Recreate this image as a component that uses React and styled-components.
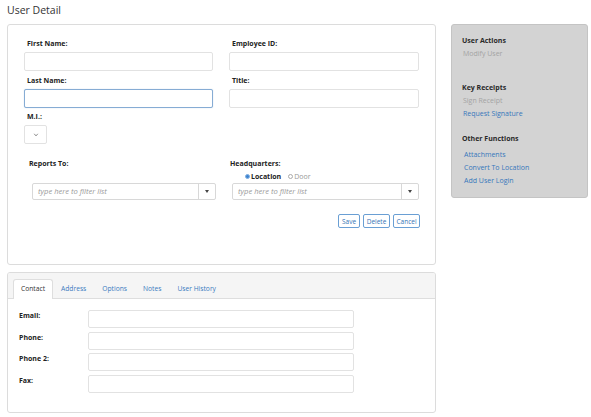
import styled, { createGlobalStyle } from "styled-components";

const GlobalStyle = createGlobalStyle`
  html, body {
    margin: 0;
    padding: 0;
    background: #fff;
  }
  body {
    font-family: "Open Sans", "Liberation Sans", sans-serif;
    font-size: 7px;
    color: #333;
  }
  * {
    box-sizing: border-box;
  }
`;

const Page = styled.div`
  width: 591px;
  padding: 3px 0 0 7px;
`;

const Title = styled.h1`
  margin: 0 0 6px;
  font-size: 10.5px;
  font-weight: 400;
  line-height: 15px;
  color: #333;
`;

const Layout = styled.div`
  display: flex;
  align-items: flex-start;
  gap: 15px;
`;

const LeftColumn = styled.div`
  width: 429px;
  display: flex;
  flex-direction: column;
  gap: 7px;
`;

const Card = styled.div`
  height: ${(p) => p.$height}px;
  border: 1px solid #dcdcdc;
  border-radius: 3px;
  background: #fff;
  overflow: hidden;
`;

const MainBody = styled.div`
  padding: 13px 16px 0;
`;

const FieldGrid = styled.div`
  display: grid;
  grid-template-columns: 189px 190px;
  column-gap: 16px;
`;

const Field = styled.div`
  display: flex;
  flex-direction: column;
  margin-top: ${(p) => p.$top || 0}px;
`;

const Label = styled.label`
  display: block;
  font-weight: 700;
  line-height: 12px;
  margin-left: ${(p) => p.$indent ?? 3}px;
  color: #222;
`;

const TextBox = styled.div`
  height: 19px;
  margin-top: 2px;
  border: 1px solid ${(p) => (p.$focused ? "#86acd4" : "#e2e2e2")};
  border-radius: 2px;
  background: #fff;
  box-shadow: ${(p) => (p.$focused ? "0 0 1px rgba(102,153,204,0.5)" : "none")};
`;

const SmallSelect = styled.div`
  width: 23px;
  height: 19px;
  margin-top: 2px;
  border: 1px solid #e2e2e2;
  border-radius: 2px;
  display: flex;
  align-items: center;
  justify-content: center;

  svg {
    width: 6px;
    height: 6px;
  }
`;

const LookupGrid = styled.div`
  display: grid;
  grid-template-columns: 187px 189px;
  column-gap: 14px;
  margin: 14px 0 0 5px;
`;

const RadioRow = styled.div`
  grid-column: 2;
  display: flex;
  align-items: center;
  gap: 7px;
  height: 13px;
  padding-left: 15px;
`;

const RadioOption = styled.span`
  display: inline-flex;
  align-items: center;
  font-weight: ${(p) => (p.$checked ? 700 : 400)};
  color: ${(p) => (p.$checked ? "#222" : "#999")};
`;

const RadioDot = styled.span`
  width: 5px;
  height: 5px;
  border-radius: 50%;
  border: 1px solid ${(p) => (p.$checked ? "#7fb0e3" : "#aaa")};
  background: ${(p) => (p.$checked ? "#3f84cf" : "#fff")};
  margin-right: 1px;
`;

const FilterBox = styled.div`
  grid-column: ${(p) => p.$col};
  grid-row: 3;
  height: 17px;
  margin-left: ${(p) => p.$offset}px;
  border: 1px solid #d8d8d8;
  border-radius: 2px;
  display: flex;
  align-items: stretch;
  background: #fff;
`;

const FilterText = styled.span`
  flex: 1;
  padding-left: 5px;
  line-height: 15px;
  font-size: 7.6px;
  font-style: italic;
  color: #999;
`;

const Caret = styled.span`
  width: 17px;
  border-left: 1px solid #d8d8d8;
  display: flex;
  align-items: center;
  justify-content: center;

  &::after {
    content: "";
    border-left: 2px solid transparent;
    border-right: 2px solid transparent;
    border-top: 3px solid #444;
  }
`;

const ButtonRow = styled.div`
  display: flex;
  justify-content: flex-end;
  gap: 3px;
  margin-top: 14px;
  margin-right: -1px;
`;

const Button = styled.button`
  height: 14px;
  width: ${(p) => p.$w}px;
  padding: 0;
  font-family: inherit;
  font-size: 6.5px;
  color: #3674b5;
  background: #fff;
  border: 1px solid #6a9fd4;
  border-radius: 2px;
`;

const TabHeader = styled.div`
  height: 26px;
  padding: 6px 0 0 5px;
  background: #f5f5f5;
  border-bottom: 1px solid #dedede;
  display: flex;
`;

const Tab = styled.div`
  height: 20px;
  padding: 0 7px;
  line-height: 18px;
  font-size: 6.7px;
  color: ${(p) => (p.$active ? "#333" : "#3a7bbf")};
  background: ${(p) => (p.$active ? "#fff" : "transparent")};
  border: 1px solid ${(p) => (p.$active ? "#dedede" : "transparent")};
  border-bottom: none;
  border-radius: 3px 3px 0 0;
`;

const TabBody = styled.div`
  padding: 11px 0 0 11px;
  display: grid;
  grid-template-columns: 69px 266px;
  row-gap: 3.5px;
`;

const RowLabel = styled.div`
  font-weight: 700;
  line-height: 12px;
  color: #222;
`;

const RowInput = styled.div`
  height: 18px;
  border: 1px solid #e2e2e2;
  border-radius: 2px;
`;

const SidePanel = styled.div`
  width: 137px;
  height: 174px;
  background: #d3d3d3;
  border: 1px solid #c4c4c4;
  border-radius: 3px;
  padding: 10px 10px 0;
`;

const PanelHeading = styled.div`
  font-weight: 700;
  line-height: 12px;
  color: #2a2a2a;
  margin-top: ${(p) => p.$top || 0}px;
`;

const PanelItem = styled.div`
  line-height: 13px;
  padding-left: ${(p) => p.$indent || 1}px;
  margin-top: ${(p) => p.$top || 0}px;
  color: ${(p) => (p.$disabled ? "#a3a3a3" : "#3677bb")};
`;

const Chevron = () => (
  <svg viewBox="0 0 10 10">
    <path d="M2 3 L5 6.5 L8 3" fill="none" stroke="#888" strokeWidth="1.6" />
  </svg>
);

const contactRows = ["Email:", "Phone:", "Phone 2:", "Fax:"];
const tabs = ["Contact", "Address", "Options", "Notes", "User History"];

export default function App() {
  return (
    <>
      <GlobalStyle />
      <Page>
        <Title>User Detail</Title>
        <Layout>
          <LeftColumn>
            <Card $height={241}>
              <MainBody>
                <FieldGrid>
                  <Field>
                    <Label>First Name:</Label>
                    <TextBox />
                  </Field>
                  <Field>
                    <Label>Employee ID:</Label>
                    <TextBox />
                  </Field>
                  <Field $top={4}>
                    <Label>Last Name:</Label>
                    <TextBox $focused />
                  </Field>
                  <Field $top={4}>
                    <Label>Title:</Label>
                    <TextBox />
                  </Field>
                  <Field $top={3}>
                    <Label>M.I.:</Label>
                    <SmallSelect>
                      <Chevron />
                    </SmallSelect>
                  </Field>
                </FieldGrid>

                <LookupGrid>
                  <Label $indent={0}>Reports To:</Label>
                  <Label $indent={0}>Headquarters:</Label>
                  <RadioRow>
                    <RadioOption $checked>
                      <RadioDot $checked />
                      Location
                    </RadioOption>
                    <RadioOption>
                      <RadioDot />
                      Door
                    </RadioOption>
                  </RadioRow>
                  <FilterBox $col={1} $offset={3}>
                    <FilterText>type here to filter list</FilterText>
                    <Caret />
                  </FilterBox>
                  <FilterBox $col={2} $offset={2}>
                    <FilterText>type here to filter list</FilterText>
                    <Caret />
                  </FilterBox>
                </LookupGrid>

                <ButtonRow>
                  <Button $w={22}>Save</Button>
                  <Button $w={27}>Delete</Button>
                  <Button $w={27}>Cancel</Button>
                </ButtonRow>
              </MainBody>
            </Card>

            <Card $height={141}>
              <TabHeader>
                {tabs.map((t, i) => (
                  <Tab key={t} $active={i === 0}>
                    {t}
                  </Tab>
                ))}
              </TabHeader>
              <TabBody>
                {contactRows.map((r) => [
                  <RowLabel key={r + "l"}>{r}</RowLabel>,
                  <RowInput key={r + "i"} />,
                ])}
              </TabBody>
            </Card>
          </LeftColumn>

          <SidePanel>
            <PanelHeading>User Actions</PanelHeading>
            <PanelItem $disabled>Modify User</PanelItem>

            <PanelHeading $top={22}>Key Receipts</PanelHeading>
            <PanelItem $disabled>Sign Receipt</PanelItem>
            <PanelItem>Request Signature</PanelItem>

            <PanelHeading $top={13}>Other Functions</PanelHeading>
            <PanelItem $indent={2} $top={3}>Attachments</PanelItem>
            <PanelItem $indent={2}>Convert To Location</PanelItem>
            <PanelItem $indent={2}>Add User Login</PanelItem>
          </SidePanel>
        </Layout>
      </Page>
    </>
  );
}
